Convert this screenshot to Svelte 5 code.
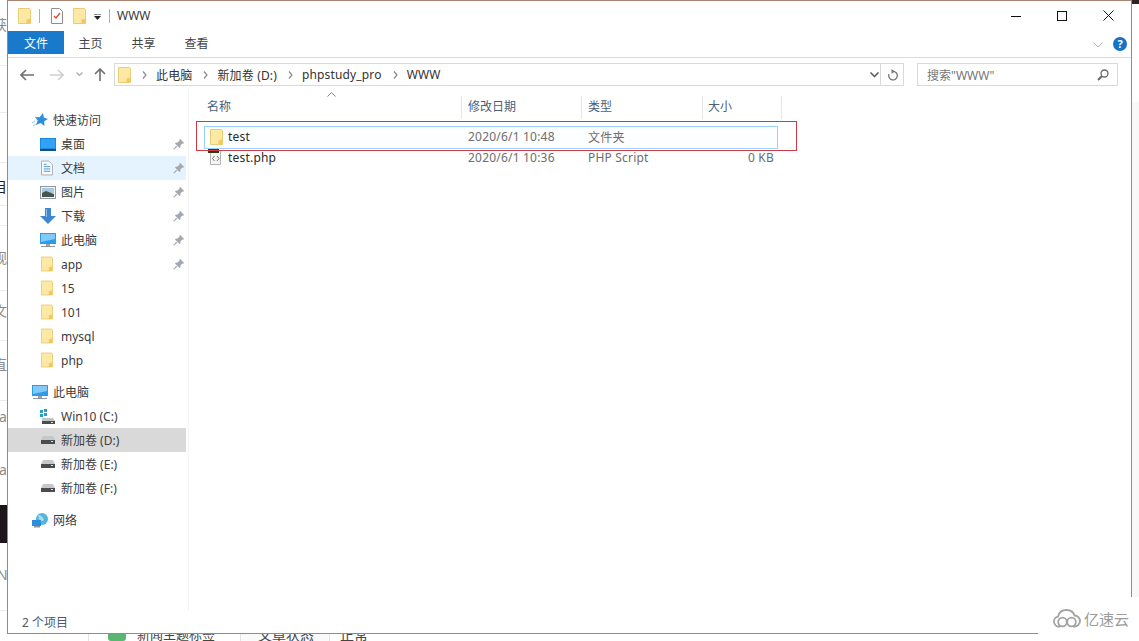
<script>
const quick = [
  { name: '桌面', icon: 'desktop', pin: true },
  { name: '文档', icon: 'doc', pin: true, hover: true },
  { name: '图片', icon: 'pic', pin: true },
  { name: '下载', icon: 'down', pin: true },
  { name: '此电脑', icon: 'pc', pin: true },
  { name: 'app', icon: 'folder', pin: true },
  { name: '15', icon: 'folder' },
  { name: '101', icon: 'folder' },
  { name: 'mysql', icon: 'folder' },
  { name: 'php', icon: 'folder' }
];
const drives = [
  { name: 'Win10 (C:)', icon: 'win' },
  { name: '新加卷 (D:)', icon: 'drive', active: true },
  { name: '新加卷 (E:)', icon: 'drive' },
  { name: '新加卷 (F:)', icon: 'drive' }
];
const crumbs = ['此电脑', '新加卷 (D:)', 'phpstudy_pro', 'WWW'];
const columns = ['名称', '修改日期', '类型', '大小'];
const behind = [
  { t: '获', x: -7, y: 17, c: 'g' }, { t: '目', x: -7, y: 179, c: 'k' }, { t: '观', x: -7, y: 250, c: 'g' },
  { t: '文', x: -7, y: 303, c: 'g' }, { t: '直', x: -7, y: 357, c: 'g' }, { t: 'ea', x: -9, y: 409, c: 'g' },
  { t: 'ea', x: -9, y: 462, c: 'g' }, { t: 'N', x: -3, y: 567, c: 'g' }
];
const rules = [65, 112, 162, 205, 225, 290, 340, 400, 510, 610];
</script>

{#snippet folder(w, h)}
  <svg width={w} height={h} viewBox="0 0 13 16">
    <path d="M.5.5h11l1 1v14H.5z" fill="#fde9a4" stroke="#e8cc78"/>
    <path d="M8.5 15.5v-4l4-1v5z" fill="#f3c95f"/>
  </svg>
{/snippet}

{#snippet pin()}
  <svg class="pin" width="12" height="12" viewBox="0 0 12 12">
    <path d="M7 .8l4.2 4.2-1.2.7-.7-.2L7.400 7.400 7.300 9.400 6.400 10 2 5.600l.6-.9 2 -.1L6.500 2.700l-.2-.7z" fill="#a3a8ae"/>
    <path d="M3.800 8.200L.8 11.200" stroke="#a3a8ae" stroke-width="1.200"/>
  </svg>
{/snippet}

{#snippet icon(kind)}
  {#if kind === 'folder'}
    <span class="narrow">{@render folder(12, 16)}</span>
  {:else if kind === 'desktop'}
    <svg width="16" height="13" viewBox="0 0 16 13">
      <rect width="16" height="13" fill="#1e88e0"/>
      <rect x="1" y="1" width="14" height="9" fill="#2fa4f5"/>
      <rect y="11" width="16" height="2" fill="#14507e"/>
    </svg>
  {:else if kind === 'doc'}
    <svg class="narrow" width="12" height="16" viewBox="0 0 13 16">
      <path d="M.5.5h8l4 4v11H.5z" fill="#fbfbfb" stroke="#a5a9ae"/>
      <path d="M3 4h3M3 6.500h7M3 9h7M3 11.500h7" stroke="#3f93c9"/>
    </svg>
  {:else if kind === 'pic'}
    <svg width="16" height="13" viewBox="0 0 16 13">
      <rect x=".5" y=".5" width="15" height="12" fill="#f1f3f5" stroke="#8f9aa4"/>
      <rect x="2" y="2" width="12" height="5" fill="#a9c8e2"/>
      <path d="M2 7l4-2 8 3v3H2z" fill="#46564c"/>
    </svg>
  {:else if kind === 'down'}
    <svg width="16" height="16" viewBox="0 0 16 16">
      <path d="M5 0h6v8h5l-8 8-8-8h5z" fill="#3d87d2"/>
      <path d="M6 1h1v8H6z" fill="#8bbfec"/>
    </svg>
  {:else if kind === 'pc'}
    <svg width="16" height="15" viewBox="0 0 16 15">
      <rect width="16" height="11" fill="#2b9cec"/>
      <path d="M1 1h14v5L1 9z" fill="#7fcaf6"/>
      <rect x="6" y="11" width="4" height="2" fill="#9aa3aa"/>
      <rect x="1" y="13" width="14" height="1" fill="#8d969d"/>
    </svg>
  {:else if kind === 'win'}
    <svg width="15" height="15" viewBox="0 0 15 15">
      <path d="M0 1h3v3H0zM4 0h3v3H4zM0 5h3v3H0zM4 4h3v3H4z" fill="#2a9fc4"/>
      <path d="M2 9h11l2 3v3H2z" fill="#c2c4c6"/>
      <rect x="2" y="12" width="13" height="3" fill="#4a4d50"/>
      <rect x="11" y="13" width="2" height="1" fill="#dfe3e5"/>
    </svg>
  {:else if kind === 'drive'}
    <svg class="narrow" width="14" height="8" viewBox="0 0 14 8">
      <path d="M2 0h10l2 4H0z" fill="#c6c8ca"/>
      <rect y="4" width="14" height="4" fill="#4a4d50"/>
      <rect x="10" y="5" width="2" height="1" fill="#dfe3e5"/>
    </svg>
  {/if}
{/snippet}

<div class="page">
  <div class="backdrop">
    {#each rules as y}
      <i class="rule" style="top:{y}px"></i>
    {/each}
    {#each behind as b}
      <span class="sliver {b.c}" style="top:{b.y}px;left:{b.x}px">{b.t}</span>
    {/each}
    <i class="dark"></i>
    <i class="corner"></i>
    <i class="rightside"></i>
    <div class="under">
      <span class="cell one"><i class="green"></i><b>新闻主题标签</b></span>
      <span class="cell two"><b>文章状态</b></span>
      <span class="cell three"><b>正常</b></span>
    </div>
  </div>

  <div class="window">
    <header class="titlebar">
      <span class="q first">{@render folder(13, 16)}</span>
      <i class="tsep"></i>
      <svg class="q check" width="12" height="16" viewBox="0 0 12 16">
        <path d="M.5.500h8l3 3v12H.5z" fill="#fff" stroke="#8d8d8d"/>
        <path d="M3 8l2 2 4-5" fill="none" stroke="#d2492a" stroke-width="1.300"/>
      </svg>
      <span class="q third">{@render folder(13, 16)}</span>
      <svg class="q drop" width="7" height="6" viewBox="0 0 7 6">
        <path d="M0 0h7" stroke="#222"/><path d="M0 2h7L3.500 6z" fill="#222"/>
      </svg>
      <i class="tsep last"></i>
      <span class="title">WWW</span>
      <div class="controls">
        <button aria-label="最小化"><svg width="10" height="10" viewBox="0 0 10 10"><path d="M0 5.500h10" stroke="#111"/></svg></button>
        <button aria-label="最大化"><svg width="10" height="10" viewBox="0 0 10 10"><rect x=".5" y=".5" width="9" height="9" fill="none" stroke="#111"/></svg></button>
        <button aria-label="关闭"><svg width="11" height="11" viewBox="0 0 11 11"><path d="M.5.500l10 10M10.500.500l-10 10" stroke="#111"/></svg></button>
      </div>
    </header>

    <nav class="ribbon">
      <span class="tab filetab">文件</span>
      <span class="tab">主页</span>
      <span class="tab">共享</span>
      <span class="tab">查看</span>
      <svg class="collapse" width="10" height="6" viewBox="0 0 10 6"><path d="M.5.500L5 5l4.500-4.500" fill="none" stroke="#b5b5b5"/></svg>
      <span class="help">?</span>
    </nav>

    <div class="addressrow">
      <div class="navbtns">
        <svg width="14" height="12" viewBox="0 0 14 12"><path d="M6 1L1 6l5 5M1 6h13" fill="none" stroke="#6f6f6f" stroke-width="1.600"/></svg>
        <svg class="fwd" width="14" height="12" viewBox="0 0 14 12"><path d="M8 1l5 5-5 5M13 6H0" fill="none" stroke="#d0d0d0" stroke-width="1.600"/></svg>
        <svg class="hist" width="7" height="5" viewBox="0 0 7 5"><path d="M.5.500l3 3 3-3" fill="none" stroke="#a8a8a8" stroke-width="1.200"/></svg>
        <svg class="up" width="12" height="13" viewBox="0 0 12 13"><path d="M1 6l5-5 5 5M6 1v12" fill="none" stroke="#6f6f6f" stroke-width="1.600"/></svg>
      </div>
      <div class="address">
        <span class="afolder">{@render folder(13, 16)}</span>
        {#each crumbs as c}
          <svg class="crumbsep" width="5" height="8" viewBox="0 0 5 8"><path d="M1 .5l3 3.500-3 3.500" fill="none" stroke="#8a8a8a" stroke-width="1.200"/></svg>
          <span class="crumb">{c}</span>
        {/each}
        <svg class="adrop" width="9" height="6" viewBox="0 0 9 6"><path d="M.5.500l4 4 4-4" fill="none" stroke="#555" stroke-width="1.500"/></svg>
      </div>
      <div class="refresh">
        <svg width="11" height="12" viewBox="0 0 11 12"><path d="M6 2.300A4.300 4.300 0 1 1 2 5" fill="none" stroke="#777" stroke-width="1.300"/><path d="M4.500 0L8 2.400 4.500 4.800z" fill="#777"/></svg>
      </div>
      <div class="search">
        <span>搜索"WWW"</span>
        <svg width="12" height="12" viewBox="0 0 12 12"><circle cx="7.500" cy="4.500" r="3.500" fill="none" stroke="#666" stroke-width="1.300"/><path d="M5 7l-4 4" stroke="#666" stroke-width="2"/></svg>
      </div>
    </div>

    <div class="body">
      <aside class="sidebar">
        <div class="row head">
          <svg class="hicon" width="16" height="14" viewBox="0 0 16 14"><path d="M11 0l.8 4.500L16 6l-3.800 2.200.2 4.800-3.700-3L4 12l1.700-4.500L3 4l4.600.3z" fill="#2d8fdc"/><path d="M3 8L0 10M4 11l-3 2" stroke="#8cc2ec"/></svg>
          <span>快速访问</span>
        </div>
        {#each quick as item}
          <div class="row" class:hover={item.hover}>
            <span class="ic">{@render icon(item.icon)}</span>
            <span>{item.name}</span>
            {#if item.pin}{@render pin()}{/if}
          </div>
        {/each}
        <div class="row head gap">
          <svg class="hicon" width="16" height="15" viewBox="0 0 16 15">
            <rect width="16" height="11" fill="#2b9cec"/><path d="M1 1h14v5L1 9z" fill="#7fcaf6"/>
            <rect x="6" y="11" width="4" height="2" fill="#9aa3aa"/><rect x="1" y="13" width="14" height="1" fill="#8d969d"/>
          </svg>
          <span>此电脑</span>
        </div>
        {#each drives as item}
          <div class="row" class:active={item.active}>
            <span class="ic">{@render icon(item.icon)}</span>
            <span>{item.name}</span>
          </div>
        {/each}
        <div class="row head gap">
          <svg class="hicon" width="16" height="15" viewBox="0 0 16 15">
            <circle cx="10" cy="6" r="6" fill="#58b3d8"/><path d="M6 2c3 0 5 2 6 5l-4 2z" fill="#a6dcef"/>
            <rect y="7" width="9" height="6" fill="#2b8fdc"/><rect x="2" y="13" width="6" height="1.500" fill="#8d969d"/>
          </svg>
          <span>网络</span>
        </div>
      </aside>

      <main class="list">
        <svg class="sort" width="9" height="5" viewBox="0 0 9 5"><path d="M.5 4.500l4-4 4 4" fill="none" stroke="#8a8a8a"/></svg>
        <div class="cols">
          {#each columns as c}
            <span>{c}</span>
          {/each}
        </div>
        <div class="file picked">
          <span class="fname"><span class="ficon">{@render folder(13, 16)}</span>test</span>
          <span>2020/6/1 10:48</span>
          <span>文件夹</span>
          <span></span>
        </div>
        <div class="file">
          <span class="fname">
            <svg class="ficon" width="13" height="16" viewBox="0 0 13 16">
              <path d="M2.500 1.500h10v14h-10z" fill="#f4f4f4" stroke="#b5b5b5"/>
              <rect width="11" height="4" fill="#2e3a14"/>
              <path d="M6.500 7L4.500 9.500l2 2.500M9 7l2 2.500L9 12" fill="none" stroke="#777"/>
            </svg>test.php
          </span>
          <span>2020/6/1 10:36</span>
          <span>PHP Script</span>
          <span class="size">0 KB</span>
        </div>
        <i class="redbox"></i>
      </main>
    </div>

    <footer class="status">2 个项目</footer>
  </div>

  <div class="logo">
    <svg width="28" height="19" viewBox="0 0 28 19">
      <path d="M7 17.500H6a5 5 0 0 1-1-9.900C6 3.500 9.500 1 13.500 1c3.800 0 7 2.200 8 5.500a5.500 5.500 0 0 1 0 11H20" fill="none" stroke="#a2a2a2" stroke-width="1.800"/>
      <circle cx="9.500" cy="13" r="4.300" fill="none" stroke="#a2a2a2" stroke-width="1.800"/>
      <circle cx="18.500" cy="13" r="4.300" fill="none" stroke="#a2a2a2" stroke-width="1.800"/>
    </svg>
    <span>亿速云</span>
  </div>
</div>

<style>
:global(body) {
  margin: 0;
  background: #fff;
}
.page {
  position: relative;
  width: 1139px;
  height: 641px;
  overflow: hidden;
  font-family: "Noto Sans", "Noto Sans CJK SC", sans-serif;
  font-size: 12px;
  color: #3c3c3c;
}

/* what shows round the window */
.backdrop {
  position: absolute;
  inset: 0;
}
.rule {
  position: absolute;
  left: 0;
  width: 7px;
  height: 1px;
  background: #ececec;
}
.sliver {
  position: absolute;
  font-size: 14px;
  line-height: 16px;
}
.sliver.g { color: #8a8a8a; }
.sliver.k { color: #222; }
.dark {
  position: absolute;
  left: 0;
  top: 505px;
  width: 7px;
  height: 38px;
  background: #1d1519;
}
.corner {
  position: absolute;
  right: 0;
  top: 0;
  width: 7px;
  height: 4px;
  background: #2a2522;
}
.rightside {
  position: absolute;
  right: 0;
  top: 102px;
  width: 7px;
  height: 495px;
  background: #f8f8f8;
}
.under {
  position: absolute;
  left: 88px;
  top: 626px;
  display: flex;
  height: 15px;
  border-left: 1px solid #e4e4e4;
}
.cell {
  display: flex;
  align-items: center;
  border-right: 1px solid #e4e4e4;
  font-size: 14px;
}
.cell b { font-weight: 400; color: #444; }
.one { width: 152px; padding-left: 19px; box-sizing: border-box; gap: 11px; font-size: 13px; }
.two { width: 89px; padding-left: 17px; box-sizing: border-box; background: #fafafa; }
.three { padding-left: 10px; border-right: 0; }
.green {
  width: 18px;
  height: 14px;
  border-radius: 3px;
  background: #5bb673;
}

.window {
  position: relative;
  box-sizing: border-box;
  margin-left: 7px;
  width: 1125px;
  height: 634px;
  display: flex;
  flex-direction: column;
  background: #fff;
  border: 1px solid #a98472;
}

.titlebar {
  height: 30px;
  flex: none;
  display: flex;
  align-items: center;
  box-sizing: border-box;
  padding-bottom: 1px;
}
.q { display: flex; flex: none; }
.first { margin-left: 10px; }
.tsep {
  width: 1px;
  height: 14px;
  margin-left: 8px;
  background: #b0b0b0;
}
.check { margin-left: 11px; }
.third { margin-left: 10px; }
.drop { margin-left: 8px; margin-top: 3px; }
.tsep.last { margin-left: 8px; }
.title {
  margin-left: 7px;
  color: #3a3a3a;
}
.controls {
  display: flex;
  margin-left: auto;
}
.controls button {
  all: unset;
  width: 46px;
  height: 29px;
  display: flex;
  align-items: center;
  justify-content: center;
}

.ribbon {
  height: 27px;
  flex: none;
  display: flex;
  box-sizing: border-box;
  border-bottom: 1px solid #dadbdc;
}
.tab {
  width: 53px;
  height: 23px;
  display: flex;
  align-items: center;
  justify-content: center;
  color: #444;
}
.filetab {
  width: 56px;
  background: #1979ca;
  color: #fff;
}
.collapse {
  margin-left: auto;
  margin-right: 10px;
  margin-top: 11px;
}
.help {
  width: 14px;
  height: 14px;
  margin-right: 4px;
  margin-top: 6px;
  border-radius: 50%;
  background: #1673c5;
  color: #fff;
  font-weight: 700;
  font-size: 11px;
  line-height: 14px;
  text-align: center;
}

.addressrow {
  height: 32px;
  flex: none;
  display: flex;
  align-items: flex-start;
  padding-top: 5px;
  box-sizing: border-box;
}
.navbtns {
  width: 106px;
  height: 23px;
  flex: none;
  display: flex;
  align-items: center;
  padding-left: 12px;
  box-sizing: border-box;
}
.fwd { margin-left: 16px; }
.hist { margin-left: 12px; }
.up { margin-left: 11px; }
.address {
  width: 767px;
  height: 23px;
  flex: none;
  box-sizing: border-box;
  display: flex;
  align-items: center;
  border: 1px solid #d9d9d9;
  color: #333;
}
.afolder { display: flex; margin-left: 3px; margin-right: 11px; }
.crumbsep { margin-right: 9px; }
.crumb { margin-right: 11px; letter-spacing: .15px; }
.adrop { margin-left: auto; margin-right: 1px; }
.refresh {
  width: 23px;
  height: 23px;
  flex: none;
  box-sizing: border-box;
  display: flex;
  align-items: center;
  justify-content: center;
  border: 1px solid #d9d9d9;
  border-left: 0;
}
.search {
  width: 201px;
  height: 23px;
  flex: none;
  margin-left: 13px;
  box-sizing: border-box;
  display: flex;
  align-items: center;
  justify-content: space-between;
  padding: 0 8px 0 9px;
  border: 1px solid #d9d9d9;
  color: #777;
}

.body {
  flex: 1;
  min-height: 0;
  display: flex;
}
.sidebar {
  width: 181px;
  flex: none;
  box-sizing: border-box;
  padding-top: 18px;
  padding-right: 2px;
  border-right: 1px solid #f3f3f3;
}
.row {
  height: 24px;
  display: flex;
  align-items: center;
  position: relative;
  color: #3c3c3c;
}
.row.hover { background: #e5f3ff; }
.row.active { background: #d9d9d9; }
.row.gap { margin-top: 8px; }
.hicon { margin-left: 24px; margin-right: 5px; flex: none; }
.ic {
  width: 29px;
  margin-left: 24px;
  margin-right: 0;
  padding-left: 8px;
  box-sizing: border-box;
  flex: none;
  display: flex;
  align-items: center;
}
.narrow { display: flex; margin-left: 1px; }
.ic :global(svg) { display: block; }
.pin {
  position: absolute;
  right: 1px;
}

.list {
  flex: 1;
  position: relative;
  padding-top: 6px;
}
.sort {
  position: absolute;
  left: 138px;
  top: 2px;
}
.cols {
  display: grid;
  grid-template-columns: 273px 120px 121px 79px;
  width: 593px;
  height: 23px;
}
.cols span {
  display: flex;
  align-items: center;
  padding-left: 6px;
  padding-bottom: 3px;
  border-right: 1px solid #e5e5e5;
  color: #4c607a;
}
.cols span:first-child { padding-left: 18px; }
.cols span:last-child { padding-left: 5px; }
.file {
  display: grid;
  grid-template-columns: 258px 120px 120px 76px;
  box-sizing: border-box;
  align-items: center;
  width: 574px;
  height: 20px;
  margin-left: 15px;
  padding-bottom: 2px;
  letter-spacing: .2px;
  color: #6d6d6d;
}
.file.picked {
  grid-template-columns: 257px 120px 120px 75px;
  height: 23px;
  margin-top: 7px;
  border: 1px solid #99d1ff;
  margin-bottom: -1px;
  background: #fdfeff;
}
.file > span:nth-child(2), .file > span:nth-child(3) { padding-left: 6px; }
.fname {
  display: flex;
  align-items: center;
  gap: 7px;
  padding-left: 4px;
  color: #2a2a2a;
}
.picked .fname { gap: 5px; padding-left: 5px; }
.ficon { display: flex; flex: none; }
.size {
  text-align: right;
  padding-right: 4px;
}
.redbox {
  position: absolute;
  left: 7px;
  top: 31px;
  width: 601px;
  height: 30px;
  box-sizing: border-box;
  border: 1px solid #cf3a44;
}

.status {
  height: 22px;
  flex: none;
  display: flex;
  align-items: center;
  padding-left: 14px;
  color: #4a5a6a;
}

.logo {
  position: absolute;
  right: 0;
  bottom: 0;
  width: 101px;
  height: 44px;
  display: flex;
  align-items: center;
  gap: 3px;
  padding: 0 0 2px 15px;
  box-sizing: border-box;
  background: #fff;
  color: #9c9c9c;
  font-size: 15px;
}
</style>
